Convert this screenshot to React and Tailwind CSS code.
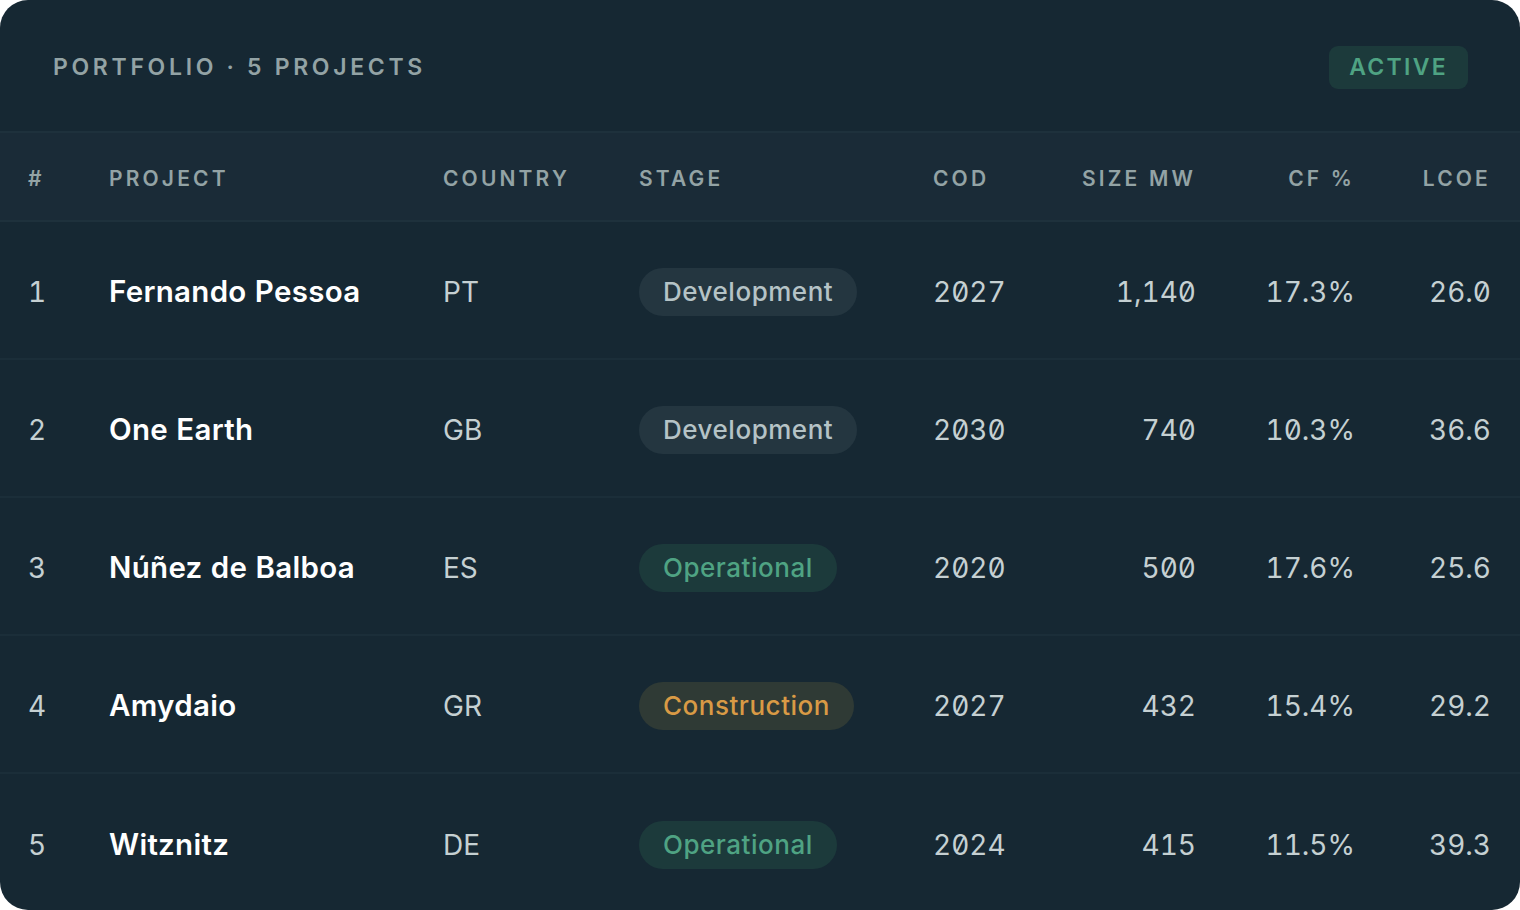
const rows = [
  ["1","Fernando Pessoa","PT","Development","2027","1,140","17.3%","26.0"],
  ["2","One Earth","GB","Development","2030","740","10.3%","36.6"],
  ["3","Núñez de Balboa","ES","Operational","2020","500","17.6%","25.6"],
  ["4","Amydaio","GR","Construction","2027","432","15.4%","29.2"],
  ["5","Witznitz","DE","Operational","2024","415","11.5%","39.3"],
];
const pill = {
  Development: "bg-[#243640] text-[#b5c3c6]",
  Operational: "bg-[#1c3a3b] text-[#4fa383]",
  Construction: "bg-[#2f3a35] text-[#d99a45]",
};
const grid = "grid grid-cols-[81px_334px_196px_294px_120px_143px_159px_136px] pl-[28px] pr-[26px] items-center";
export default function App() {
  return (
    <div className="w-[1520px] h-[910px] bg-[#162833] rounded-[28px] overflow-hidden text-[#dfe7e8]" style={{fontFamily:"Inter, 'Noto Sans', sans-serif"}}>
      <div className="h-[133px] pt-[3px] flex items-center justify-between pl-[53px] pr-[52px] border-b-2 border-[#1e313c]">
        <div className="text-[23px] font-semibold tracking-[0.16em] text-[#93a3a5]">PORTFOLIO · 5 PROJECTS</div>
        <div className="h-[43px] px-[20px] rounded-[9px] bg-[#1c3a3b] text-[#4fa383] text-[23px] font-semibold tracking-[0.1em] flex items-center">ACTIVE</div>
      </div>
      <div className={grid + " h-[89px] pt-[4px] bg-[#1a2b37] border-b-2 border-[#1e313c] text-[21px] font-semibold tracking-[0.15em] text-[#93a3a5]"}>
        <div>#</div><div>PROJECT</div><div>COUNTRY</div><div>STAGE</div><div>COD</div>
        <div className="text-right">SIZE MW</div><div className="text-right">CF %</div><div className="text-right">LCOE</div>
      </div>
      {rows.map((r,i)=>(
        <div key={i} className={grid + " h-[138px] pt-[3px] text-[28px] slashed-zero tabular-nums " + (i<4?"border-b-2 border-[#1b2e39]":"")}>
          <div className="text-[#c5d0d2]">{r[0]}</div>
          <div className="font-semibold text-white text-[29.5px] tracking-[0.01em]">{r[1]}</div>
          <div className="text-[#c5d0d2]">{r[2]}</div>
          <div><span className={"inline-flex items-center h-[48px] px-[24px] rounded-full text-[26px] font-medium tracking-[0.02em] " + pill[r[3]]}>{r[3]}</span></div>
          <div className="text-[#c5d0d2]">{r[4]}</div>
          <div className="text-right text-[#c5d0d2]">{r[5]}</div>
          <div className="text-right text-[#c5d0d2]">{r[6]}</div>
          <div className="text-right text-[#c5d0d2]">{r[7]}</div>
        </div>
      ))}
    </div>
  );
}
